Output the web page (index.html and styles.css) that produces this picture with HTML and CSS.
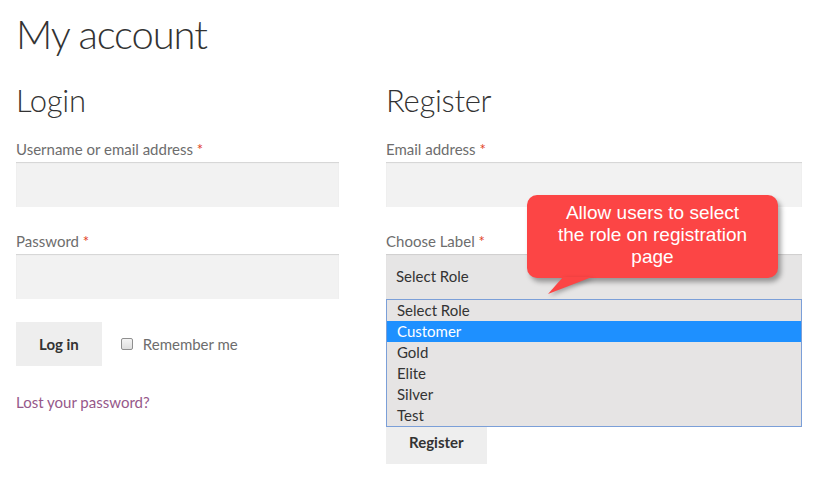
FILE: index.html
```html
<!DOCTYPE html>
<html lang="en">
<head>
    <meta charset="UTF-8">
    <meta name="viewport" content="width=device-width, initial-scale=1.0">
    <title>My account</title>
    <link rel="stylesheet" href="styles.css">
</head>
<body>
    <div class="page">
        <h1 class="title">My account</h1>

        <div class="columns">
            <div class="col">
                <h2 class="col-title">Login</h2>

                <label class="field">
                    <span class="field-label">Username or email address <span class="req">*</span></span>
                    <input type="text" class="input" name="username">
                </label>

                <label class="field">
                    <span class="field-label">Password <span class="req">*</span></span>
                    <input type="password" class="input" name="password">
                </label>

                <div class="login-row">
                    <button class="btn">Log in</button>
                    <label class="remember">
                        <span class="check"></span>
                        <span>Remember me</span>
                    </label>
                </div>

                <a class="lost" href="#">Lost your password?</a>
            </div>

            <div class="col">
                <h2 class="col-title">Register</h2>

                <label class="field">
                    <span class="field-label">Email address <span class="req">*</span></span>
                    <input type="email" class="input" name="email">
                </label>

                <div class="field role-field">
                    <span class="field-label">Choose Label <span class="req">*</span></span>
                    <div class="select">Select Role</div>
                    <ul class="options">
                        <li>Select Role</li>
                        <li class="selected">Customer</li>
                        <li>Gold</li>
                        <li>Elite</li>
                        <li>Silver</li>
                        <li>Test</li>
                    </ul>

                    <div class="callout">
                        Allow users to select<br>the role on registration<br>page
                        <svg class="callout-tail" width="46" height="20" viewBox="0 0 46 20">
                            <path d="M15 0 L44 0 L0 17 Z" fill="#fc4545"/>
                        </svg>
                    </div>
                </div>

                <button class="btn register">Register</button>
            </div>
        </div>
    </div>
</body>
</html>
```

FILE: styles.css
```css
* {
    box-sizing: border-box;
}
body {
    margin: 0;
    background: #fff;
    font-family: Lato, "Open Sans", sans-serif;
    color: #6d6d6d;
}
.page {
    padding: 6px 16px 0;
}
.title {
    margin: 0;
    font-size: 40px;
    font-weight: 300;
    line-height: 56px;
    letter-spacing: -1.1px;
    color: #333;
}
.columns {
    display: grid;
    grid-template-columns: 323px 416px;
    gap: 47px;
    margin-top: 16px;
}
.col-title {
    margin: 0 0 16px;
    font-size: 31px;
    font-weight: 300;
    line-height: 44px;
    letter-spacing: -0.3px;
    color: #333;
}
.field {
    display: block;
    margin-bottom: 23px;
}
.field-label {
    display: block;
    font-size: 15px;
    line-height: 22px;
    margin-bottom: 2px;
}
.req {
    color: #e2401c;
}
.input {
    display: block;
    width: 100%;
    height: 45px;
    border: 0;
    background: #f2f2f2;
    box-shadow: inset 0 1px 1px rgba(0, 0, 0, 0.125);
    outline: none;
}
.login-row {
    display: flex;
    align-items: center;
    gap: 19px;
}
.btn {
    height: 44px;
    padding: 0 23px;
    border: 0;
    background: #eeeeee;
    font-family: inherit;
    font-size: 15px;
    font-weight: 700;
    color: #333;
}
.remember {
    display: flex;
    align-items: center;
    gap: 10px;
    font-size: 15px;
}
.check {
    width: 12px;
    height: 12px;
    border: 1px solid #8f8f8f;
    border-radius: 2px;
    background: linear-gradient(#f4f4f4, #dedede);
}
.lost {
    display: block;
    margin-top: 27px;
    font-size: 15px;
    color: #96588a;
    text-decoration: none;
}
.role-field {
    position: relative;
}
.select {
    height: 45px;
    padding: 0 10px;
    line-height: 45px;
    font-size: 15px;
    color: #333;
    background: #e6e5e5;
    box-shadow: inset 0 1px 1px rgba(0, 0, 0, 0.1);
}
.options {
    position: absolute;
    left: 0;
    right: 0;
    top: 69px;
    z-index: 2;
    margin: 0;
    padding: 0;
    list-style: none;
    background: #e6e4e4;
    border: 1px solid #7b9fd8;
}
.options li {
    height: 21px;
    padding: 0 10px;
    line-height: 21px;
    font-size: 15px;
    color: #333;
}
.options li.selected {
    background: #1e90ff;
    color: #fff;
}
.callout {
    position: absolute;
    left: 141px;
    top: -35px;
    z-index: 3;
    width: 251px;
    height: 83px;
    padding-top: 7px;
    border-radius: 10px;
    background: #fc4545;
    box-shadow: 3px 4px 5px rgba(0, 0, 0, 0.35);
    font-family: "Liberation Sans", Arial, sans-serif;
    font-size: 19px;
    line-height: 22px;
    text-align: center;
    color: #fff;
}
.callout-tail {
    position: absolute;
    left: 21px;
    top: 82px;
    filter: drop-shadow(2px 2px 2px rgba(0, 0, 0, 0.3));
}
.register {
    margin-top: 98px;
    padding: 0 23px;
}
```
